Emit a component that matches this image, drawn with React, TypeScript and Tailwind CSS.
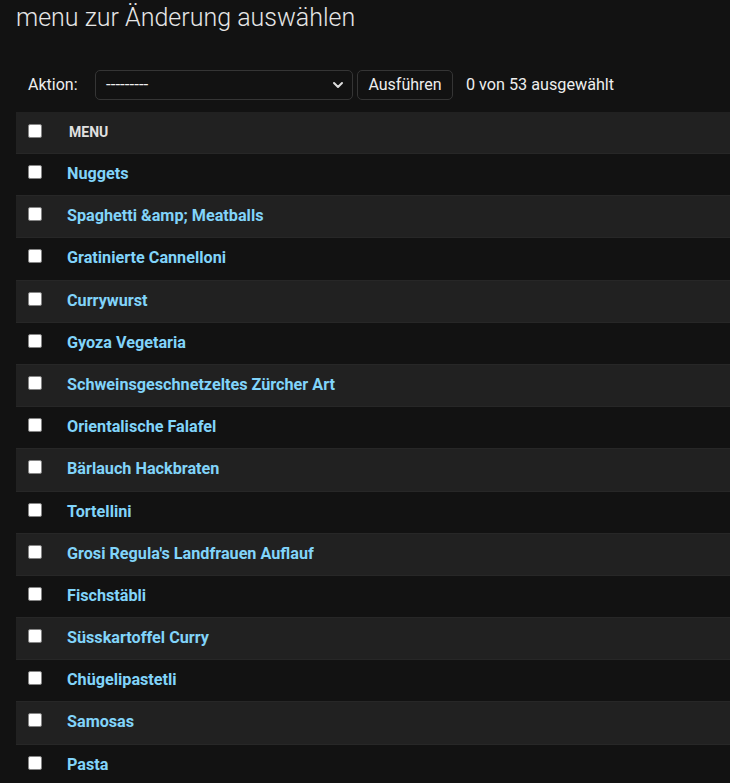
import { ChevronDown } from 'lucide-react'

const menus = [
  'Nuggets',
  'Spaghetti &amp; Meatballs',
  'Gratinierte Cannelloni',
  'Currywurst',
  'Gyoza Vegetaria',
  'Schweinsgeschnetzeltes Zürcher Art',
  'Orientalische Falafel',
  'Bärlauch Hackbraten',
  'Tortellini',
  "Grosi Regula's Landfrauen Auflauf",
  'Fischstäbli',
  'Süsskartoffel Curry',
  'Chügelipastetli',
  'Samosas',
  'Pasta',
]

function Box() {
  return <div className="w-[14px] h-[14px] bg-white border border-[#858585] rounded-[2px] shrink-0" />
}

export default function App() {
  return (
    <div className="min-h-screen bg-[#121212] text-[#eeeeee] font-['Roboto',sans-serif] pl-4 overflow-hidden">
      <h1 className="text-[25px] font-light leading-none pt-[5px] h-[58px] text-[#e6e6e6]">
        menu zur Änderung auswählen
      </h1>

      <div className="flex items-center h-[30px] mt-[12px] text-[16px]">
        <span className="pl-3 w-[79px]">Aktion:</span>
        <div className="flex items-center justify-between w-[258px] h-[30px] border border-[#353535] rounded-[5px] pl-[10px] pr-[6px]">
          <span className="text-[17px]">---------</span>
          <ChevronDown className="w-4 h-4 text-[#dddddd]" strokeWidth={3} />
        </div>
        <button className="ml-[4px] h-[30px] w-[96px] border border-[#353535] rounded-[5px] text-[16px] text-[#eeeeee] bg-[#121212]">
          Ausführen
        </button>
        <span className="ml-[13px] text-[16.2px]">0 von 53 ausgewählt</span>
      </div>

      <div className="mt-[12px]">
        <div className="flex items-start h-[42px] bg-[#212121] border-b border-[#272727] pl-3 pt-[12px]">
          <Box />
          <span className="ml-[27px] text-[14px] font-bold uppercase text-[#e0e0e0] leading-[16px]">Menu</span>
        </div>
        {menus.map((m, i) => (
          <div
            key={m}
            className={`flex items-start h-[42.2px] border-b border-[#272727] pl-3 pt-[11px] ${
              i % 2 === 1 ? 'bg-[#212121]' : 'bg-[#121212]'
            }`}
          >
            <Box />
            <a className="ml-[25px] text-[16.2px] font-bold text-[#81d4fa] leading-[20px] -mt-[1px]">{m}</a>
          </div>
        ))}
      </div>
    </div>
  )
}
